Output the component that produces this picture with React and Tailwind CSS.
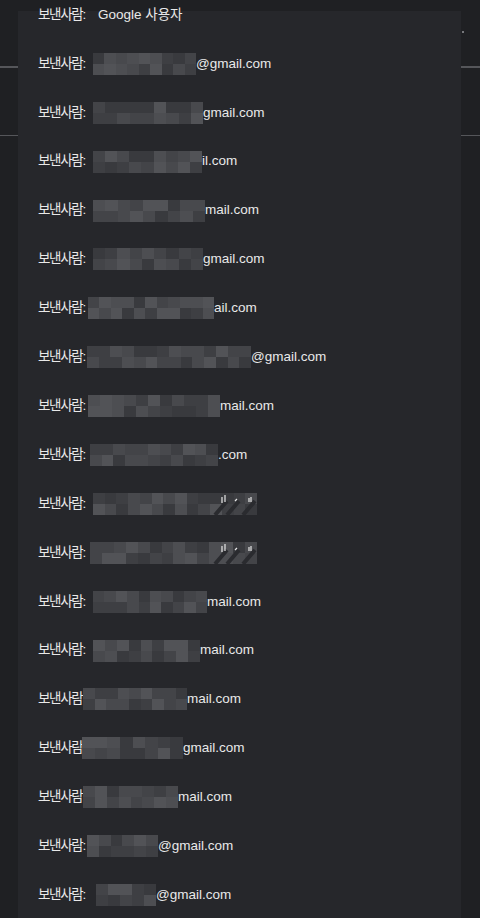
import React from "react";

// mosaic shades, picked per block
const SHADES = [
  "bg-[#393a3e]",
  "bg-[#3e3f43]",
  "bg-[#434448]",
  "bg-[#48494d]",
  "bg-[#4d4e52]",
  "bg-[#525357]",
];

const LABEL_END = 90;

// [start x, end x, visible suffix, glitch]
const rows = [
  [93, 196, "@gmail.com"],
  [93, 203, "gmail.com"],
  [93, 202, "il.com"],
  [93, 205, "mail.com"],
  [93, 203, "gmail.com"],
  [88, 214, "ail.com"],
  [87, 251, "@gmail.com"],
  [88, 220, "mail.com"],
  [90, 218, ".com"],
  [93, 257, "", true],
  [90, 257, "", true],
  [93, 207, "mail.com"],
  [93, 200, "mail.com"],
  [83, 187, "mail.com"],
  [82, 183, "gmail.com"],
  [83, 178, "mail.com"],
  [87, 158, "@gmail.com"],
  [96, 156, "@gmail.com"],
];

const shadeAt = (seed, i) => {
  const n = Math.abs(Math.sin(seed * 91.7 + i * 12.9898) * 43758.5453);
  return SHADES[Math.floor((n - Math.floor(n)) * SHADES.length)];
};

const Glitch = () => (
  <svg className="absolute right-0 top-0 h-full w-[44px]" viewBox="0 0 44 22" fill="none">
    <path d="M2 22 L14 8 M14 22 L26 8 M30 22 L42 8" stroke="#2a2b2f" strokeWidth="4" />
    <path d="M9 10 L9 4 M12 9 L12 2 M22 8 L24 6 M36 9 L36 5 M38 9 L38 4" stroke="#e8e8e8" strokeWidth="1.2" />
  </svg>
);

const Mosaic = ({ seed, width, glitch }) => {
  const cols = Math.max(1, Math.round(width / 12));
  return (
    <div className="relative flex h-[22px] shrink-0 flex-col" style={{ width }}>
      {[0, 1].map((r) => (
        <div key={r} className="flex flex-1">
          {Array.from({ length: cols }).map((_, c) => (
            <div key={c} className={`flex-1 ${shadeAt(seed + r * 7, c)}`} />
          ))}
        </div>
      ))}
      {glitch && <Glitch />}
    </div>
  );
};

const Label = () => (
  <span className="w-[52px] shrink-0 whitespace-nowrap tracking-[-1.3px]">보낸사람:</span>
);

export default function App() {
  return (
    <div
      className="flex h-[918px] w-[480px] overflow-hidden bg-[#1f2023] text-[13.5px] text-[#e9e9e9]"
      style={{ fontFamily: '"Liberation Sans", "Noto Sans CJK KR", sans-serif' }}
    >
      {/* left gutter */}
      <div className="flex w-[18px] shrink-0 flex-col">
        <div className="mt-[66px] h-[1.5px] bg-[#55565a]" />
        <div className="mt-[67px] h-[1.5px] bg-[#55565a]" />
      </div>

      {/* sender list */}
      <div className="mt-[11px] w-[443px] shrink-0 bg-[#26272b] pl-[20px]">
        <div className="-mt-[20.5px] flex h-[48.9px] items-center">
          <Label />
          <span className="ml-[8px]">Google 사용자</span>
        </div>
        {rows.map(([start, end, suffix, glitch], i) => (
          <div key={i} className="flex h-[48.9px] items-center whitespace-nowrap">
            <Label />
            <div style={{ marginLeft: start - LABEL_END }}>
              <Mosaic seed={i + 1} width={end - start} glitch={glitch} />
            </div>
            {suffix && <span>{suffix}</span>}
          </div>
        ))}
      </div>

      {/* right gutter */}
      <div className="flex flex-1 flex-col">
        <div className="ml-[1px] mt-[31px] h-[2px] w-[2px] bg-[#77787c]" />
        <div className="mt-[33px] h-[1.5px] bg-[#55565a]" />
        <div className="mt-[67px] h-[1.5px] bg-[#55565a]" />
      </div>
    </div>
  );
}
